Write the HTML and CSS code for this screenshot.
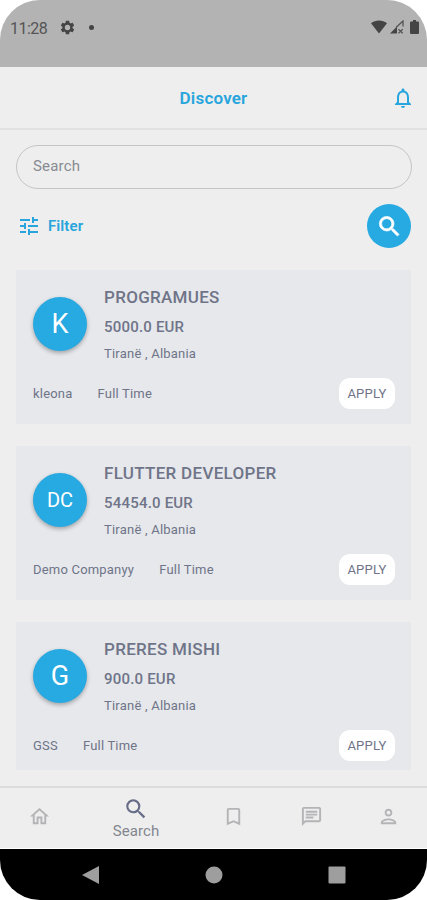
FILE: index.html
```html
<!DOCTYPE html>
<html lang="en">
<head>
  <meta charset="UTF-8" />
  <meta name="viewport" content="width=device-width, initial-scale=1" />
  <title>Discover</title>
  <link rel="stylesheet" href="styles.css">
</head>
<body>
  <div class="phone">

    <div class="status-bar">
      <span class="time">11:28</span>
      <svg class="gear" viewBox="0 0 24 24"><path fill-rule="evenodd" d="M19.14 12.94c.04-.3.06-.61.06-.94s-.02-.64-.07-.94l2.03-1.58c.18-.14.23-.41.12-.61l-1.92-3.32c-.12-.22-.37-.29-.59-.22l-2.39.96c-.5-.38-1.03-.7-1.62-.94l-.36-2.54c-.04-.24-.24-.41-.48-.41h-3.84c-.24 0-.43.17-.47.41l-.36 2.54c-.59.24-1.13.57-1.62.94l-2.39-.96c-.22-.08-.47 0-.59.22L2.74 8.87c-.12.21-.08.47.12.61l2.03 1.58c-.05.3-.09.63-.09.94s.02.64.07.94l-2.03 1.58c-.18.14-.23.41-.12.61l1.92 3.32c.12.22.37.29.59.22l2.39-.96c.5.38 1.03.7 1.62.94l.36 2.54c.05.24.24.41.48.41h3.84c.24 0 .44-.17.47-.41l.36-2.54c.59-.24 1.13-.56 1.62-.94l2.39.96c.22.08.47 0 .59-.22l1.92-3.32c.12-.22.07-.47-.12-.61l-2.01-1.58zM12 15.800a3.800 3.800 0 1 1 0-7.600 3.800 3.800 0 0 1 0 7.600z"/></svg>
      <span class="dot"></span>
      <div class="status-icons">
        <svg width="16" height="14" viewBox="0 0 16 14"><path d="M0 3.3C4.6-.5 11.400-.5 16 3.300L8 13.500z"/></svg>
        <svg width="14" height="14" viewBox="0 0 14 14"><path d="M0 13.500 7 6.500V13.500z"/><path class="signal-line" d="M6 7.500 13 1V6.500M8.500 9.300 12.700 13.300M12.700 9.300 8.500 13.300"/></svg>
        <svg width="9" height="14" viewBox="0 0 9 14"><path d="M1 1.500H3V0H6V1.500H8Q9 1.500 9 2.500V13Q9 14 8 14H1Q0 14 0 13V2.500Q0 1.500 1 1.500z"/></svg>
      </div>
    </div>

    <header class="header">
      <h1>Discover</h1>
      <svg class="bell" viewBox="0 0 24 24"><path d="M12 22c1.100 0 2-.9 2-2h-4c0 1.100.9 2 2 2zm6-6v-5c0-3.070-1.630-5.640-4.500-6.320V4c0-.83-.67-1.500-1.500-1.500s-1.500.67-1.500 1.500v.68C7.640 5.360 6 7.920 6 11v5l-2 2v1h16v-1l-2-2zm-2 1H8v-6c0-2.480 1.510-4.500 4-4.500s4 2.020 4 4.500v6z"/></svg>
    </header>

    <main class="content">
      <input class="search-input" type="text" placeholder="Search" />

      <div class="filter-row">
        <div class="filter">
          <svg viewBox="0 0 24 24"><path d="M3 17v2h6v-2H3zM3 5v2h10V5H3zm10 16v-2h8v-2h-8v-2h-2v6h2zM7 9v2H3v2h4v2h2V9H7zm14 4v-2H11v2h10zm-6-4h2V7h4V5h-4V3h-2v6z"/></svg>
          <span>Filter</span>
        </div>
        <button class="search-btn" aria-label="Search">
          <svg viewBox="0 0 24 24"><path d="M15.500 14h-.79l-.28-.27A6.471 6.471 0 0 0 16 9.500 6.500 6.500 0 1 0 9.500 16c1.610 0 3.090-.59 4.230-1.570l.27.28v.79l5 4.990L20.490 19l-4.990-5zm-6 0C7.010 14 5 11.990 5 9.500S7.010 5 9.500 5 14 7.010 14 9.500 11.990 14 9.500 14z"/></svg>
        </button>
      </div>

      <div class="jobs">
        <div class="job">
          <div class="job-top">
            <div class="avatar">K</div>
            <div class="job-info">
              <h2>PROGRAMUES</h2>
              <p class="salary">5000.0 EUR</p>
              <p class="location">Tiranë , Albania</p>
            </div>
          </div>
          <div class="job-bottom">
            <span>kleona</span>
            <span>Full Time</span>
            <button class="apply">APPLY</button>
          </div>
        </div>

        <div class="job">
          <div class="job-top">
            <div class="avatar avatar-small">DC</div>
            <div class="job-info">
              <h2>FLUTTER DEVELOPER</h2>
              <p class="salary">54454.0 EUR</p>
              <p class="location">Tiranë , Albania</p>
            </div>
          </div>
          <div class="job-bottom">
            <span>Demo Companyy</span>
            <span>Full Time</span>
            <button class="apply">APPLY</button>
          </div>
        </div>

        <div class="job">
          <div class="job-top">
            <div class="avatar">G</div>
            <div class="job-info">
              <h2>PRERES MISHI</h2>
              <p class="salary">900.0 EUR</p>
              <p class="location">Tiranë , Albania</p>
            </div>
          </div>
          <div class="job-bottom">
            <span>GSS</span>
            <span>Full Time</span>
            <button class="apply">APPLY</button>
          </div>
        </div>
      </div>
    </main>

    <nav class="tabs">
      <a class="tab"><svg viewBox="0 0 24 24"><path d="M12 3 2 12h3v8h6v-6h2v6h6v-8h3L12 3zm5 15h-2v-6H9v6H7v-7.810l5-4.500 5 4.500V18z"/></svg></a>
      <a class="tab active">
        <svg viewBox="0 0 24 24"><path d="M15.500 14h-.79l-.28-.27A6.471 6.471 0 0 0 16 9.500 6.500 6.500 0 1 0 9.500 16c1.610 0 3.090-.59 4.230-1.570l.27.28v.79l5 4.990L20.490 19l-4.990-5zm-6 0C7.010 14 5 11.990 5 9.500S7.010 5 9.500 5 14 7.010 14 9.500 11.990 14 9.500 14z"/></svg>
        <span>Search</span>
      </a>
      <a class="tab"><svg viewBox="0 0 24 24"><path d="M17 3H7c-1.100 0-2 .9-2 2v16l7-3 7 3V5c0-1.100-.9-2-2-2zm0 15-5-2.180L7 18V5h10v13z"/></svg></a>
      <a class="tab"><svg viewBox="0 0 24 24"><path d="M4 4h16v12H5.170L4 17.170V4m0-2c-1.100 0-1.990.9-1.990 2L2 22l4-4h14c1.100 0 2-.9 2-2V4c0-1.100-.9-2-2-2H4zm2 10h8v2H6v-2zm0-3h12v2H6V9zm0-3h12v2H6V6z"/></svg></a>
      <a class="tab"><svg viewBox="0 0 24 24"><path d="M12 6c1.100 0 2 .9 2 2s-.9 2-2 2-2-.9-2-2 .9-2 2-2m0 10c2.700 0 5.800 1.290 6 2H6c.23-.72 3.310-2 6-2m0-12C9.790 4 8 5.790 8 8s1.790 4 4 4 4-1.790 4-4-1.790-4-4-4zm0 10c-2.670 0-8 1.340-8 4v2h16v-2c0-2.660-5.330-4-8-4z"/></svg></a>
    </nav>

    <div class="system-nav">
      <svg viewBox="0 0 18 20"><path d="M0 10 17 1V19z"/></svg>
      <svg viewBox="0 0 18 20"><circle cx="9" cy="10" r="8.500"/></svg>
      <svg viewBox="0 0 18 20"><rect x=".5" y="1.500" width="17" height="17" rx="1"/></svg>
    </div>

  </div>
</body>
</html>
```

FILE: styles.css
```css
* {
  box-sizing: border-box;
}
body {
  margin: 0;
  background: #fff;
  font-family: Roboto, sans-serif;
  color: #6f7488;
}
h1, h2, p {
  margin: 0;
}
button {
  border: none;
  padding: 0;
  font-family: inherit;
}
svg {
  display: block;
  fill: currentColor;
}
.phone {
  display: flex;
  flex-direction: column;
  width: 427px;
  height: 900px;
  overflow: hidden;
  background: #eee;
  border-radius: 40px;
}

/* status bar */
.status-bar {
  display: flex;
  align-items: center;
  height: 67px;
  padding: 0 8px 13px 10px;
  background: #b3b3b3;
  color: #444;
}
.time {
  padding-top: 2px;
  font-size: 16px;
  letter-spacing: -0.5px;
  color: #555;
}
.gear {
  width: 17px;
  height: 17px;
  margin-left: 12px;
}
.dot {
  width: 5px;
  height: 5px;
  margin-left: 13px;
  border-radius: 50%;
  background: #444;
}
.status-icons {
  display: flex;
  align-items: center;
  gap: 3px;
  margin-left: auto;
}
.status-icons svg:last-child {
  margin-left: 3px;
}
.signal-line {
  fill: none;
  stroke: #555;
  stroke-width: 1.3;
}

/* header */
.header {
  display: grid;
  grid-template-columns: 24px 1fr 24px;
  align-items: center;
  height: 63px;
  padding: 0 12px;
  border-bottom: 2px solid #e1e1e1;
  color: #27a5dc;
}
.header h1 {
  grid-column: 2;
  font-size: 17px;
  font-weight: 600;
  letter-spacing: 0.2px;
  text-align: center;
}
.bell {
  width: 24px;
  height: 24px;
}

/* search and filter */
.content {
  flex: 1;
  display: flex;
  flex-direction: column;
  min-height: 0;
  padding: 15px 16px 16px;
}
.search-input {
  flex: none;
  width: 396px;
  height: 44px;
  padding: 0 16px 2px;
  border: 1px solid #c4c4c4;
  border-radius: 22px;
  background: transparent;
  font-family: inherit;
  font-size: 15px;
  letter-spacing: 0.2px;
}
.search-input::placeholder {
  color: #888b91;
}
.filter-row {
  display: flex;
  align-items: center;
  justify-content: space-between;
  height: 44px;
  margin: 15px 0 22px;
}
.filter {
  display: flex;
  align-items: center;
  gap: 7px;
  padding-left: 1px;
  font-size: 15px;
  font-weight: 600;
  letter-spacing: 0.1px;
  color: #27a5dc;
}
.filter svg {
  width: 24px;
  height: 24px;
}
.search-btn {
  display: flex;
  align-items: center;
  justify-content: center;
  width: 44px;
  height: 44px;
  border-radius: 50%;
  background: #27a9e1;
  color: #fff;
}
.search-btn svg {
  width: 27px;
  height: 27px;
  stroke: currentColor;
  stroke-width: 0.6;
}

/* job cards */
.jobs {
  flex: 1;
  display: flex;
  flex-direction: column;
  gap: 22px;
  min-height: 0;
  overflow: hidden;
}
.job {
  flex: none;
  height: 154px;
  padding: 16px 16px 16px 17px;
  background: #e6e8ec;
}
.job-top {
  display: flex;
  align-items: center;
  gap: 17px;
}
.avatar {
  display: flex;
  align-items: center;
  justify-content: center;
  width: 54px;
  height: 54px;
  border-radius: 50%;
  background: #27a9e1;
  box-shadow: 0 2px 4px rgba(0, 0, 0, 0.3);
  color: #fff;
  font-size: 27px;
}
.avatar-small {
  font-size: 20px;
}
.job-info h2 {
  font-size: 17px;
  font-weight: 500;
  line-height: 22px;
  letter-spacing: 0.3px;
}
.salary {
  margin-top: 9px;
  font-size: 15px;
  font-weight: 500;
  line-height: 20px;
  letter-spacing: 0.2px;
}
.location {
  margin-top: 9px;
  font-size: 13px;
  line-height: 16px;
  letter-spacing: 0.22px;
}
.job-bottom {
  display: flex;
  align-items: center;
  gap: 25px;
  margin-top: 16px;
  font-size: 13px;
  letter-spacing: 0.2px;
}
.job-bottom span {
  padding-bottom: 1px;
}
.apply {
  width: 56px;
  height: 31px;
  margin-left: auto;
  padding-bottom: 1px;
  border-radius: 11px;
  background: #fff;
  color: #6f7488;
  font-size: 13px;
  letter-spacing: 0.2px;
}

/* bottom tabs */
.tabs {
  display: grid;
  grid-template-columns: 78px 116px 78px 78px 77px;
  height: 63px;
  padding-bottom: 3px;
  border-top: 2px solid #dcdcdc;
  border-bottom: 1px solid #fff;
  color: #b4b4b6;
}
.tab {
  display: flex;
  flex-direction: column;
  align-items: center;
  justify-content: center;
}
.tab svg {
  width: 23px;
  height: 23px;
}
.active {
  padding-top: 3px;
  color: #83868f;
  font-size: 15px;
  letter-spacing: 0.1px;
}
.active svg {
  width: 26px;
  height: 26px;
  color: #676d88;
}

/* system buttons */
.system-nav {
  display: grid;
  grid-template-columns: 1fr 1fr 1fr;
  align-items: center;
  justify-items: center;
  height: 51px;
  padding: 0 29px;
  background: #000;
  color: #9e9e9e;
}
.system-nav svg {
  width: 18px;
  height: 20px;
}
```
